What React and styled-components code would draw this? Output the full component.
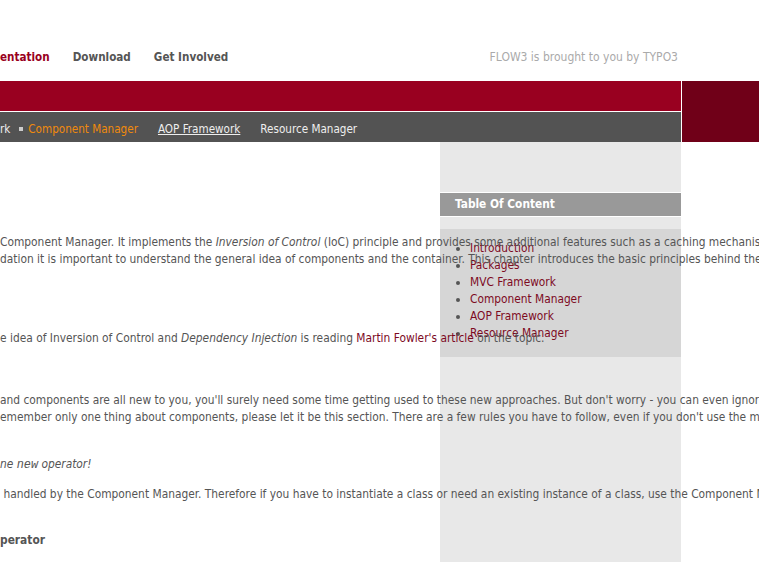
import React from 'react';
import styled, { createGlobalStyle } from 'styled-components';

const GlobalStyle = createGlobalStyle`
    html, body {
        margin: 0;
        padding: 0;
        background: #fff;
        overflow: hidden;
    }
    body {
        font-family: "DejaVu Sans Condensed", "DejaVu Sans", sans-serif;
    }
`;

const App = () => {
    return (
        <S.Page>
            <GlobalStyle />
            {/* top navigation */}
            <S.Header>
                <S.TopNav>
                    <S.TopLink $active>entation</S.TopLink>
                    <S.TopLink>Download</S.TopLink>
                    <S.TopLink>Get Involved</S.TopLink>
                </S.TopNav>
                <S.Claim>FLOW3 is brought to you by TYPO3</S.Claim>
            </S.Header>

            {/* banner with sub navigation */}
            <S.Banner>
                <S.BannerMain>
                    <S.RedBar />
                    <S.SubNav>
                        <S.SubLink>rk</S.SubLink>
                        <S.SubLink $current>Component Manager</S.SubLink>
                        <S.SubLink $underline>AOP Framework</S.SubLink>
                        <S.SubLink>Resource Manager</S.SubLink>
                    </S.SubNav>
                </S.BannerMain>
                <S.BannerSide />
            </S.Banner>

            <S.Content>
                <S.Sidebar>
                    <S.TocHeader>Table Of Content</S.TocHeader>
                    <S.TocBox>
                        <S.TocList>
                            <li><S.TocLink>Introduction</S.TocLink></li>
                            <li><S.TocLink>Packages</S.TocLink></li>
                            <li><S.TocLink>MVC Framework</S.TocLink></li>
                            <li><S.TocLink>Component Manager</S.TocLink></li>
                            <li><S.TocLink>AOP Framework</S.TocLink></li>
                            <li><S.TocLink>Resource Manager</S.TocLink></li>
                        </S.TocList>
                    </S.TocBox>
                </S.Sidebar>

                <S.Main>
                    <S.Para $top={92}>
                        Component Manager. It implements the <em>Inversion of Control</em> (IoC) principle and provides some additional features such as a caching mechanism for components.<br />
                        dation it is important to understand the general idea of components and the container. This chapter introduces the basic principles behind the component concept.
                    </S.Para>
                    <S.Para $top={62}>
                        e idea of Inversion of Control and <em>Dependency Injection</em> is reading <S.TextLink>Martin Fowler's article</S.TextLink> on the topic.
                    </S.Para>
                    <S.Para $top={45}>
                        and components are all new to you, you'll surely need some time getting used to these new approaches. But don't worry - you can even ignore them for now.<br />
                        emember only one thing about components, please let it be this section. There are a few rules you have to follow, even if you don't use the more advanced features.
                    </S.Para>
                    <S.Para $top={30} $italic>
                        ne <S.Code>new</S.Code> operator!
                    </S.Para>
                    <S.Para $top={12}>
                        {'\u00a0'}handled by the Component Manager. Therefore if you have to instantiate a class or need an existing instance of a class, use the Component Manager.
                    </S.Para>
                    <S.SubHeading>perator</S.SubHeading>
                </S.Main>
            </S.Content>
        </S.Page>
    );
};

const S = {};

S.Page = styled.div`
    width: 759px;
    height: 562px;
    overflow: hidden;
`;

S.Header = styled.div`
    display: flex;
    justify-content: space-between;
    align-items: flex-start;
    width: 681px;
    height: 81px;
    padding: 49px 3px 0 0;
    box-sizing: border-box;
`;

S.TopNav = styled.div`
    display: flex;
    gap: 23px;
`;

S.TopLink = styled.span`
    font-size: 11.6px;
    line-height: 16px;
    font-weight: bold;
    color: ${({ $active }) => ($active ? '#990020' : '#555')};
`;

S.Claim = styled.span`
    font-size: 12px;
    line-height: 16px;
    color: #aaa;
`;

S.Banner = styled.div`
    display: flex;
    gap: 1px;
    height: 61px;
`;

S.BannerMain = styled.div`
    display: flex;
    flex-direction: column;
    gap: 1px;
    width: 681px;
`;

S.RedBar = styled.div`
    height: 30px;
    background: #990020;
`;

S.SubNav = styled.div`
    display: flex;
    align-items: center;
    height: 30px;
    padding-top: 3px;
    box-sizing: border-box;
    background: #535353;
    gap: 20px;
`;

S.SubLink = styled.span`
    display: flex;
    align-items: center;
    font-size: 11.6px;
    color: ${({ $current }) => ($current ? '#f08a0c' : '#eee')};
    text-decoration: ${({ $underline }) => ($underline ? 'underline' : 'none')};

    ${({ $current }) =>
        $current &&
        `
        margin-left: -11px;
        &::before {
            content: '';
            width: 4px;
            height: 4px;
            background: #ccc;
            margin-right: 5px;
        }
    `}
`;

S.BannerSide = styled.div`
    flex: 1;
    background: #700018;
`;

S.Content = styled.div`
    display: grid;
    grid-template-columns: 440px 241px 1fr;
    min-height: 420px;
`;

S.Sidebar = styled.div`
    grid-column: 2;
    grid-row: 1;
    background: #e8e8e8;
    padding-top: 50px;
`;

S.TocHeader = styled.div`
    border-top: 1px solid #fff;
    border-bottom: 1px solid #fff;
    background: #999;
    color: #fff;
    font-size: 11.8px;
    font-weight: bold;
    line-height: 23px;
    padding-left: 15px;
`;

S.TocBox = styled.div`
    margin-top: 12px;
    background: #d6d6d6;
    padding: 11px 0 15px;
`;

S.TocList = styled.ul`
    margin: 0;
    padding-left: 30px;
    list-style: disc;
    color: #555;

    li {
        font-size: 11.8px;
        line-height: 17px;
    }
`;

S.TocLink = styled.span`
    color: #7d0a1f;
`;

S.Main = styled.div`
    grid-column: 1 / -1;
    grid-row: 1;
    min-width: 0;
    color: #555;
    font-size: 11.85px;
    line-height: 17px;
    white-space: nowrap;
`;

S.Para = styled.p`
    margin: ${({ $top }) => $top}px 0 0;
    font-style: ${({ $italic }) => ($italic ? 'italic' : 'normal')};
`;

S.TextLink = styled.span`
    color: #7d0a1f;
`;

S.Code = styled.code`
    font-family: "Liberation Mono", "DejaVu Sans Mono", monospace;
    font-size: 11.85px;
    font-style: italic;
`;

S.SubHeading = styled.h3`
    margin: 29px 0 0;
    font-size: 11.85px;
    line-height: 17px;
    font-weight: bold;
    color: #555;
`;

export default App;
